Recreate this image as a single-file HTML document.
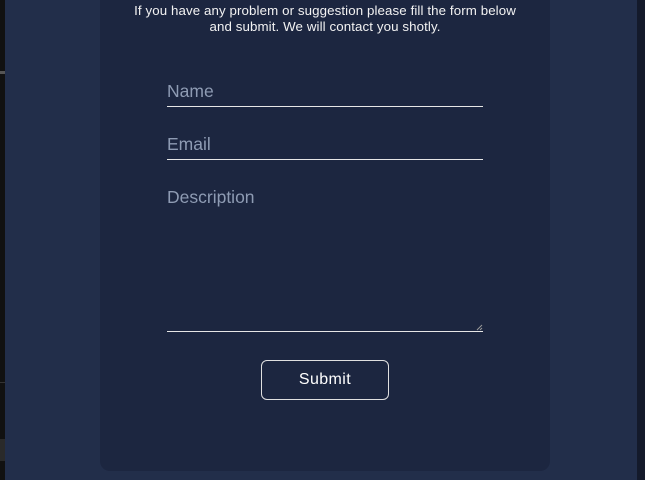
<!DOCTYPE html>
<html><head><meta charset="utf-8"><style>
*{margin:0;padding:0;box-sizing:border-box}
html,body{width:645px;height:480px;overflow:hidden;background:#222e4a;font-family:"Liberation Sans",sans-serif}
.ls{position:absolute;left:0;top:0;width:5px;height:480px;background:#111}
.ls1{position:absolute;left:0;top:71px;width:5px;height:3px;background:#555}
.ls2{position:absolute;left:0;top:382px;width:5px;height:1px;background:#333}
.ls3{position:absolute;left:0;top:439px;width:5px;height:22px;background:#2a2a2a}
.rs{position:absolute;right:0;top:0;width:8px;height:480px;background:#141a2b}
.card{position:absolute;left:100px;top:-20px;width:450px;height:491px;background:#1c2640;border-radius:10px}
.t{position:absolute;left:80px;width:490px;text-align:center;color:#f2f2f2;font-size:13.3px;letter-spacing:0.1px}
.lab{position:absolute;left:167px;color:#8e9bb3;font-size:17.5px}
.line{position:absolute;left:167px;width:316px;height:1px;background:#e6e6e6}
.btn{position:absolute;left:261px;top:360px;width:128px;height:40px;border:1px solid #e0e0e0;border-radius:6px;color:#fff;font-size:16px;text-align:center;line-height:38px;letter-spacing:0.4px}
</style></head><body>
<div class="ls"></div><div class="ls1"></div><div class="ls2"></div><div class="ls3"></div>
<div class="rs"></div>
<div class="card"></div>
<div class="t" style="top:3px">If you have any problem or suggestion please fill the form below</div>
<div class="t" style="top:19px">and submit. We will contact you shotly.</div>
<div class="lab" style="top:81px">Name</div>
<div class="line" style="top:106px"></div>
<div class="lab" style="top:134px">Email</div>
<div class="line" style="top:159px"></div>
<div class="lab" style="top:187px">Description</div>
<div class="line" style="top:331px"></div>
<svg style="position:absolute;left:476px;top:324px" width="7" height="7"><path d="M1 6L6 1M4 6L6 4" stroke="#999" stroke-width="1"/></svg>
<div class="btn">Submit</div>
</body></html>
